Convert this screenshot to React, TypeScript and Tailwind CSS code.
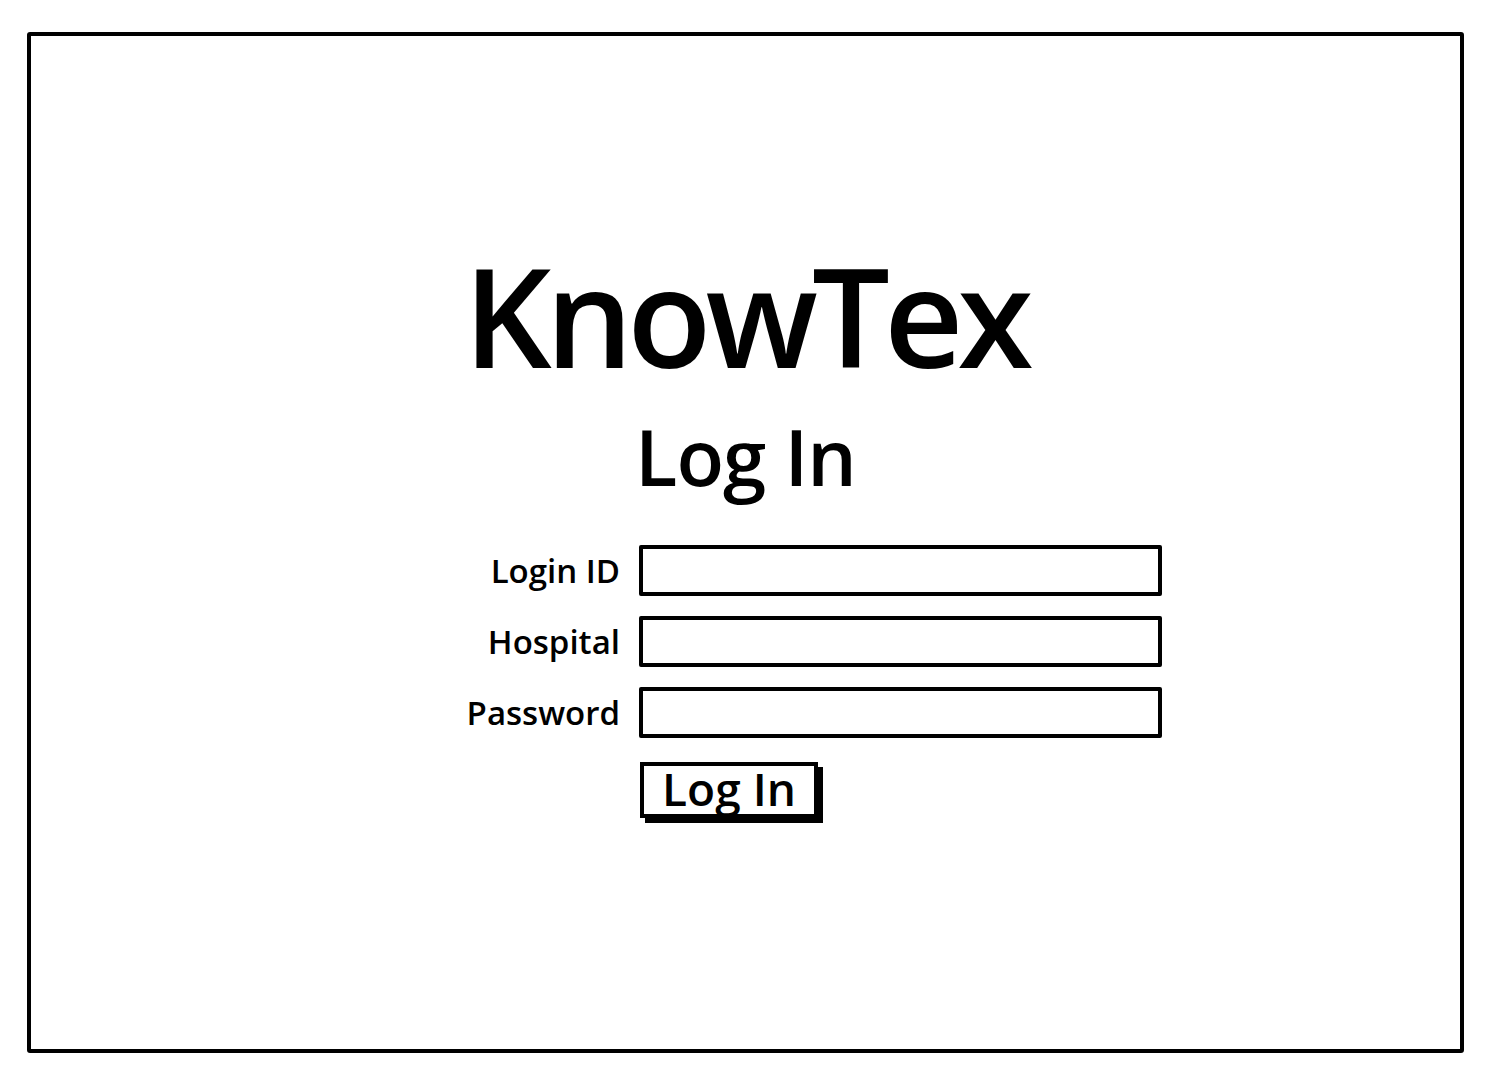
export default function App() {
  const fields = ["Login ID", "Hospital", "Password"];
  return (
    <div
      className="w-[1492px] h-[1080px] bg-white pl-[27px] pt-[32px]"
      style={{ fontFamily: "'Open Sans', Lato, sans-serif" }}
    >
      {/* 프레임 */}
      <div className="w-[1437px] h-[1021px] border-[4px] border-black rounded-[3px] flex flex-col">
        {/* 제목 */}
        <div className="mt-[209px] text-center text-[138px] font-semibold leading-none text-black tracking-[-6px]">
          KnowTex
        </div>
        <div className="mt-[34px] text-center text-[78px] font-semibold leading-none text-black tracking-[-1px]">
          Log In
        </div>

        {/* 폼 */}
        <div className="mt-[50px] ml-[419px] flex flex-col gap-[20px]">
          {fields.map((f) => (
            <div key={f} className="flex items-center gap-[19px]">
              <div className="w-[170px] text-right text-[33px] font-semibold leading-none text-black">{f}</div>
              <div className="w-[523px] h-[51px] border-[4px] border-black rounded-[2px] bg-white" />
            </div>
          ))}
          <div className="flex ml-[190px] mt-[4px]">
            <button className="w-[178px] h-[56px] border-[4px] border-black bg-white shadow-[5px_5px_0_0_#000] text-[46px] font-semibold leading-none text-black flex items-center justify-center pb-[4px]">
              Log In
            </button>
          </div>
        </div>
      </div>
    </div>
  );
}
